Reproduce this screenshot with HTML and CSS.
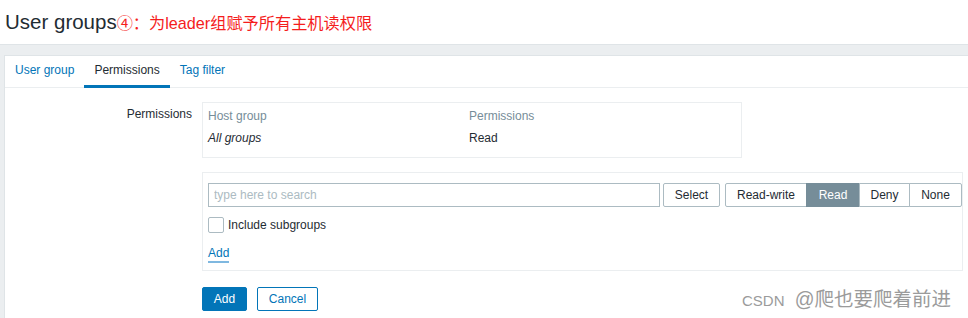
FILE: index.html
```html
<!DOCTYPE html>
<html lang="zh-CN">
<head>
    <meta charset="UTF-8">
    <meta name="viewport" content="width=device-width, initial-scale=1.0">
    <title>User groups</title>
    <link rel="stylesheet" href="styles.css">
</head>
<body>
<header class="page-header">
    <h1 class="page-title">User groups<span class="note">④：为leader组赋予所有主机读权限</span></h1>
</header>

<div class="wrapper">
    <div class="container">
        <ul class="tabs">
            <li><a href="#">User group</a></li>
            <li class="active"><a href="#">Permissions</a></li>
            <li><a href="#">Tag filter</a></li>
        </ul>

        <form class="form">
            <div class="form-label">Permissions</div>
            <div class="form-field">
                <div class="perm-box">
                    <table class="perm-table">
                        <tr>
                            <th class="col-group">Host group</th>
                            <th>Permissions</th>
                        </tr>
                        <tr>
                            <td class="col-group"><em>All groups</em></td>
                            <td>Read</td>
                        </tr>
                    </table>
                </div>

                <div class="add-box">
                    <div class="search-row">
                        <input class="search" type="text" placeholder="type here to search">
                        <button type="button" class="btn-alt">Select</button>
                        <div class="radio-list">
                            <span class="seg">Read-write</span>
                            <span class="seg active">Read</span>
                            <span class="seg">Deny</span>
                            <span class="seg">None</span>
                        </div>
                    </div>
                    <label class="check-row">
                        <span class="checkbox"></span>
                        Include subgroups
                    </label>
                    <div class="link-row"><a href="#" class="link-action">Add</a></div>
                </div>

                <div class="buttons">
                    <button type="button" class="btn-primary">Add</button>
                    <button type="button" class="btn-outline">Cancel</button>
                </div>
            </div>
        </form>
    </div>
</div>

<div class="watermark">CSDN <span class="cn">@爬也要爬着前进</span></div>
</body>
</html>
```

FILE: styles.css
```css
/* page */
body {
    margin: 0;
    font-family: "Liberation Sans", Arial, "Noto Sans CJK SC", sans-serif;
    font-size: 12px;
    color: #1f2c33;
    background-color: #ebeef0;
    overflow: hidden;
}
.page-header {
    background-color: #fff;
    height: 44px;
    border-bottom: 1px solid #dfe4e7;
}
.page-title {
    margin: 0;
    padding-left: 5px;
    height: 44px;
    line-height: 44px;
    font-size: 20.5px;
    font-weight: normal;
    color: #1f2c33;
}
.note {
    font-size: 16.2px;
    color: #f51d1d;
    font-family: "Liberation Sans", "Noto Sans CJK SC", sans-serif;
}
.wrapper {
    padding: 10px 0 0 4px;
}
.container {
    background-color: #fff;
    border: 1px solid #dfe4e7;
    border-right: none;
    height: 300px;
}

/* tabs */
.tabs {
    display: flex;
    list-style: none;
    margin: 0;
    padding: 0;
    border-bottom: 1px solid #ebeef0;
    height: 31px;
}
.tabs li {
    height: 32px;
}
.tabs a {
    display: block;
    padding: 0 10px;
    line-height: 29px;
    border-bottom: 3px solid transparent;
    color: #0275b8;
    text-decoration: none;
}
.tabs .active a {
    color: #1f2c33;
    border-bottom-color: #0275b8;
}

/* form */
.form {
    display: grid;
    grid-template-columns: 187px 1fr;
    column-gap: 10px;
    padding: 14px 5px 0 0;
}
.form-label {
    text-align: right;
    padding-top: 5px;
    line-height: 14px;
}
.perm-box {
    width: 528px;
    border: 1px solid #ebeef0;
    padding: 0 5px 8px;
}
.perm-table {
    border-collapse: collapse;
    width: 100%;
}
.perm-table th {
    text-align: left;
    font-weight: normal;
    color: #768d99;
    padding: 6px 0 5px;
    line-height: 14px;
}
.perm-table td {
    padding: 3px 0 4px;
    line-height: 14px;
}
.perm-table .col-group {
    width: 261px;
}

.add-box {
    margin-top: 14px;
    border: 1px solid #ebeef0;
    padding: 10px 0 10px 5px;
}
.search-row {
    display: flex;
    align-items: center;
}
.search {
    flex: 1;
    height: 24px;
    box-sizing: border-box;
    border: 1px solid #acbbc2;
    padding: 0 5px;
    font-family: inherit;
    font-size: 12px;
    color: #1f2c33;
    outline: none;
}
.search::placeholder {
    color: #acbbc2;
}
.btn-alt {
    margin-left: 3px;
    width: 57px;
    height: 24px;
    border: 1px solid #acbbc2;
    border-radius: 2px;
    background-color: #fff;
    color: #1f2c33;
    font-family: inherit;
    font-size: 12px;
    padding: 0;
}
.radio-list {
    display: flex;
    margin-left: 5px;
}
.seg {
    height: 24px;
    line-height: 22px;
    box-sizing: border-box;
    border: 1px solid #acbbc2;
    margin-left: -1px;
    text-align: center;
    background-color: #fff;
}
.seg:nth-child(1) { width: 82px; margin-left: 0; border-radius: 2px 0 0 2px; }
.seg:nth-child(2) { width: 54px; }
.seg:nth-child(3) { width: 51px; }
.seg:nth-child(4) { width: 53px; border-radius: 0 2px 2px 0; }
.seg.active {
    background-color: #768d99;
    border-color: #768d99;
    color: #fff;
}
.check-row {
    display: flex;
    align-items: center;
    margin-top: 10px;
    line-height: 16px;
}
.checkbox {
    width: 16px;
    height: 16px;
    box-sizing: border-box;
    border: 1px solid #acbbc2;
    border-radius: 2px;
    margin-right: 4px;
}
.link-row {
    margin-top: 13px;
    line-height: 14px;
}
.link-action {
    color: #0275b8;
    text-decoration: none;
    border-bottom: 2px solid #7fb8e0;
    padding-bottom: 1px;
}

.buttons {
    display: flex;
    gap: 10px;
    margin-top: 16px;
}
.btn-primary,
.btn-outline {
    height: 24px;
    border-radius: 2px;
    font-family: inherit;
    font-size: 12px;
    padding: 0;
    border: 1px solid #0275b8;
}
.btn-primary {
    width: 45px;
    background-color: #0275b8;
    color: #fff;
}
.btn-outline {
    width: 61px;
    background-color: #fff;
    color: #0275b8;
}

/* watermark over the corner */
.watermark {
    position: absolute;
    left: 742px;
    top: 287px;
    font-family: "Liberation Sans", "Noto Sans CJK SC", sans-serif;
    font-size: 15px;
    color: #9b9b9b;
    line-height: 24px;
}
.watermark .cn {
    font-size: 19.5px;
    margin-left: 6px;
}
```
